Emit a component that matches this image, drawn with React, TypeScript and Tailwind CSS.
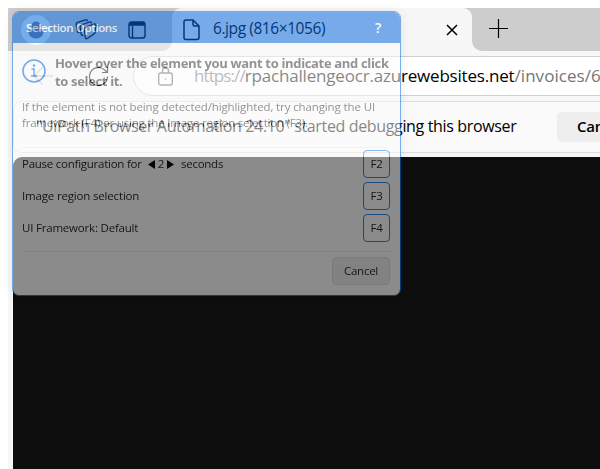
import React from "react";

function TabStrip() {
  return (
    <div className="flex h-[43px] bg-[#f7f7f7] text-black">
      <div className="flex h-[43px] w-[164px] shrink-0 items-center rounded-br-[10px] bg-[#cdcdcd] pl-[13px]">
        <div className="flex size-[30px] shrink-0 items-center justify-center rounded-full bg-[#f7fafc]">
          <svg width="16" height="18" viewBox="0 0 16 18" fill="#718096">
            <circle cx="8" cy="5" r="4.5" />
            <path d="M3 8h10q2.500 0 2.500 2.500C15.500 15 12 17.500 8 17.500S.5 15 .5 10.500Q.5 8 3 8z" />
          </svg>
        </div>
        <svg className="ml-[24px] shrink-0" width="22" height="21" viewBox="0 0 22 21" fill="none" stroke="black" strokeWidth="1.300" strokeLinejoin="round" strokeLinecap="round">
          <path d="M10.700 8.200 19.300 5q1.900-.3 1.700 1.500l-.8 6.500q-.3 1.300-1.300 2l-6.700 4.500q-1.500.8-1.900-.8L9.300 10.300q-.2-1.500 1.400-2.100z" />
          <path d="M7.800 16.500q-1.500 0-1.700-1.300L5.200 8q-.1-1.500 1.300-2.100L14.500 3q1.600-.4 1.800 1" />
          <path d="M4 13.500q-1.500 0-1.700-1.300L1.200 5.500Q1 4 2.500 3.400L10.500.9q1.600-.4 1.900.8" />
        </svg>
        <svg className="ml-[31px] shrink-0" width="18" height="18" viewBox="0 0 18 18" fill="none" stroke="black" strokeWidth="1.400">
          <rect x="1" y="1" width="16" height="16" rx="2.500" />
          <path d="M1 4h16M4.500 5v12" />
          <path d="M2 2.500h14" strokeWidth="3" />
        </svg>
      </div>
      <div className="flex w-[300px] shrink-0 items-center bg-[#cdcdcd]">
        <div className="flex h-[43px] w-[300px] items-center rounded-t-[9px] bg-[#f7f7f7] pl-[11px]">
          <svg className="shrink-0" width="17" height="22" viewBox="0 0 17 22" fill="none" stroke="black" strokeWidth="1.500" strokeLinejoin="round">
            <path d="M3 1h7l6 6v11.500q0 2-2 2H3q-2 0-2-2V3q0-2 2-2z" />
            <path d="M10 1v4.500q0 1.500 1.500 1.500H16" />
          </svg>
          <span className="ml-[13px] w-[233px] shrink-0 pb-px text-[15.500px] tracking-[-0.420px]">6.jpg (816×1056)</span>
          <svg className="shrink-0" width="12" height="12" viewBox="0 0 12 12" stroke="black" strokeWidth="1.500">
            <path d="m1 1 10 10M11 1 1 11" />
          </svg>
        </div>
      </div>
      <div className="flex grow items-center rounded-bl-[10px] bg-[#cdcdcd] pb-[2px] pl-[17px]">
        <svg width="19" height="19" viewBox="0 0 19 19" stroke="black" strokeWidth="1.200">
          <path d="M9.500 0v19M0 9.500h19" />
        </svg>
      </div>
    </div>
  );
}

function Toolbar() {
  return (
    <div className="flex h-[50px] items-center bg-[#f7f7f7] pl-[25px]">
      <svg className="shrink-0" width="20" height="20" viewBox="0 0 20 20" fill="none" stroke="#c5c5c5" strokeWidth="1.300">
        <path d="M20 10H1M10 1 1 10l9 9" />
      </svg>
      <svg className="ml-[35px] shrink-0" width="21" height="21" viewBox="0 0 21 21" fill="none" stroke="black" strokeWidth="1.200">
        <path d="M19.500 10.500A9 9 0 1 1 16.700 4l2.800 2.500M19.500 1v5.500H14" />
      </svg>
      <div className="ml-[24px] flex h-[40px] w-[600px] shrink-0 items-center whitespace-nowrap rounded-full border border-[#cfcfcf] bg-white pl-[24px]">
        <svg className="shrink-0" width="15" height="19" viewBox="0 0 15 19" fill="none" stroke="#666" strokeWidth="1.400">
          <rect x=".7" y="6" width="13.600" height="12" rx="2" />
          <path d="M4.500 6V3.500Q4.500 1 7.500 1t3 2.500V6" />
          <circle cx="7.500" cy="12" r=".8" fill="#666" stroke="none" />
        </svg>
        <span className="ml-[21px] pb-px text-[17px] text-[#767676]">
          <span className="tracking-[-0.900px]">https://</span>
          <span className="tracking-[-0.190px] text-black">rpachallengeocr.azurewebsites.net</span>
          <span className="tracking-[0.050px]">/invoices/6</span>
        </span>
      </div>
    </div>
  );
}

function DebugBar() {
  return (
    <div className="ml-[5px] flex h-[52px] items-center whitespace-nowrap rounded-l-[9px] border-y border-l border-[#dedede] bg-[#fafafa] pl-[22px]">
      <span className="w-[521px] shrink-0 pb-[2px] text-[16px] tracking-[-0.350px] text-black">
        "UiPath Browser Automation 24.10" started debugging this browser
      </span>
      <div className="flex h-[30px] w-[90px] shrink-0 items-center rounded-[5px] bg-[#eeeeee] pb-px pl-[20px] text-[15px] font-semibold tracking-[-0.200px]">
        Cancel
      </div>
    </div>
  );
}

function KeyRow({ label, shortcut }: { label: React.ReactNode; shortcut: string }) {
  return (
    <div className="flex h-[32px] items-center justify-between">
      <span className="flex items-center">{label}</span>
      <span className="flex h-[28px] w-[27px] items-center justify-center rounded-[4px] border border-[#2484db]">{shortcut}</span>
    </div>
  );
}

function SelectionDialog() {
  return (
    <div className="absolute left-[12px] top-[11px] h-[285px] w-[389px] overflow-hidden whitespace-nowrap rounded-[7px] border border-[#0666db] bg-[#fbfbfb] text-[11.500px] tracking-[-0.250px] text-[#222] opacity-[0.53] shadow-[0_0_12px_rgba(0,0,0,0.150)]">
      <div className="flex h-[31px] items-center justify-between bg-[#0666db] pl-[13px] pr-[19px] font-semibold text-white">
        <span className="tracking-[-0.380px]">Selection Options</span>
        <span className="text-[14px]">?</span>
      </div>
      <div className="pl-[9px] pr-[10px]">
        <div className="flex h-[56px] pt-[10px]">
          <svg className="mt-[6px] shrink-0" width="24" height="24" viewBox="0 0 24 24" fill="none" stroke="#0666db" strokeWidth="1.600">
            <circle cx="12" cy="12" r="11" />
            <path d="M9.500 10H12v7M9 17h6" strokeWidth="1.400" />
            <circle cx="12" cy="6.500" r="1.200" fill="#0666db" stroke="none" />
          </svg>
          <p className="ml-[9px] pt-px text-[13px] font-bold leading-[18px] tracking-[-0.340px] text-[#333]">
            Hover over the element you want to indicate and click
            <br />
            to select it.
          </p>
        </div>
        <p className="h-[49px] leading-[16px] tracking-[-0.120px] text-[#333]">
          If the element is not being detected/highlighted, try changing the UI
          <br />
          <span className="tracking-[-0.200px]">framework (F4) or using the Image region selection (F3).</span>
        </p>
        <div className="-mt-px border-t border-[#efefef] pb-px">
          <KeyRow
            shortcut="F2"
            label={
              <>
                Pause configuration for
                <svg className="ml-[6px]" width="7" height="9" viewBox="0 0 7 9"><path d="M7 0v9L0 4.500z" /></svg>
                <span className="mx-[3px]">2</span>
                <svg className="mr-[7px]" width="7" height="9" viewBox="0 0 7 9"><path d="M0 0v9l7-4.500z" /></svg>
                seconds
              </>
            }
          />
          <KeyRow shortcut="F3" label={<span className="tracking-[-0.170px]">Image region selection</span>} />
          <KeyRow shortcut="F4" label={<span className="tracking-[-0.200px]">UI Framework: Default</span>} />
        </div>
        <div className="mt-[6px] flex justify-end border-t border-[#e9e9e9] pt-[5px]">
          <div className="flex h-[28px] w-[58px] items-center justify-center rounded-[4px] border border-[#dcdcdc] bg-[#ebebeb]">Cancel</div>
        </div>
      </div>
    </div>
  );
}

export default function App() {
  return (
    <div className="relative h-[469px] w-[600px] overflow-hidden bg-white pl-[8px] pt-[8px] font-['Open_Sans','Noto_Sans',sans-serif]">
      <div className="flex h-[461px] flex-col overflow-hidden bg-[#f7f7f7]">
        <TabStrip />
        <Toolbar />
        <DebugBar />
        <div className="ml-[5px] mt-[4px] grow rounded-tl-[9px] bg-[#0e0e0e]" />
      </div>
      <SelectionDialog />
    </div>
  );
}
